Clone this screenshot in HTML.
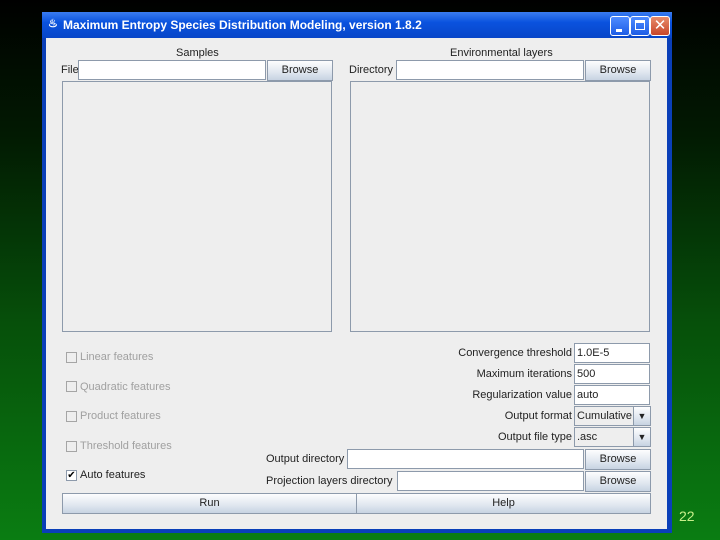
<!DOCTYPE html><html><head><style>
body{margin:0;width:720px;height:540px;overflow:hidden;background:linear-gradient(#000 0%,#021a02 25%,#06500a 60%,#0a7d12 100%);font-family:"Liberation Sans",sans-serif;position:relative}
.a{position:absolute}
.win{left:42px;top:12px;width:630px;height:521px;background:#0a3fb8}
.tb{left:42px;top:12px;width:630px;height:26px;background:linear-gradient(#3a7cf0,#0a52de 40%,#0846c8);color:#fff;font-weight:bold;font-size:12px}
.cont{left:46px;top:38px;width:621px;height:491px;background:#eeeeee}
.f{background:#fff;border:1px solid #8d9aab;box-sizing:border-box}
.b{background:linear-gradient(#fdfdfe,#dfe6ef 60%,#c7d3e2);border:1px solid #8d9aab;box-sizing:border-box;font-size:11px;text-align:center;color:#222;line-height:18px}
.l{font-size:11px;color:#222;white-space:nowrap}
.cb{width:11px;height:11px;border:1px solid #a5a5a5;box-sizing:border-box;background:#eee}
.g{color:#a0a0a0;font-size:11px}
.list{background:#eeeeee;border:1px solid #8d9aab;box-sizing:border-box}
.tbb{width:20px;height:20px;border:1px solid #fff;border-radius:3px;box-sizing:border-box;top:16px;background:linear-gradient(#4f8cff,#1d5ce6)}
</style></head><body>
<div class="a win"></div>
<div class="a tb"><span class="a" style="left:6px;top:5px;font-size:11px">♨</span><span class="a" style="left:21px;top:6px">Maximum Entropy Species Distribution Modeling, version 1.8.2</span></div>
<div class="a tbb" style="left:610px"><div class="a" style="left:5px;top:12px;width:6px;height:3px;background:#fff"></div></div>
<div class="a tbb" style="left:630px"><div class="a" style="left:4px;top:3px;width:10px;height:10px;border:1px solid #fff;border-top-width:3px;box-sizing:border-box"></div></div>
<div class="a tbb" style="left:650px;background:linear-gradient(#e88b6a,#c8462a);color:#fff;font-size:15px;text-align:center;line-height:18px">✕</div>
<div class="a cont"></div>
<div class="a l" style="left:176px;top:47px">Samples</div>
<div class="a l" style="left:450px;top:47px">Environmental layers</div>
<div class="a l" style="left:61px;top:64px">File</div>
<div class="a f" style="left:78px;top:60px;width:188px;height:20px"></div>
<div class="a b" style="left:267px;top:60px;width:66px;height:21px">Browse</div>
<div class="a l" style="left:349px;top:64px">Directory</div>
<div class="a f" style="left:396px;top:60px;width:188px;height:20px"></div>
<div class="a b" style="left:585px;top:60px;width:66px;height:21px">Browse</div>
<div class="a list" style="left:62px;top:81px;width:270px;height:251px"></div>
<div class="a list" style="left:350px;top:81px;width:300px;height:251px"></div>
<div class="a cb" style="left:66px;top:352px"></div><div class="a g" style="left:80px;top:351px">Linear features</div>
<div class="a cb" style="left:66px;top:381px"></div><div class="a g" style="left:80px;top:381px">Quadratic features</div>
<div class="a cb" style="left:66px;top:411px"></div><div class="a g" style="left:80px;top:410px">Product features</div>
<div class="a cb" style="left:66px;top:441px"></div><div class="a g" style="left:80px;top:440px">Threshold features</div>
<div class="a cb" style="left:66px;top:470px;border-color:#8d9aab;background:#fff;font-size:10px;line-height:9px;text-align:center">✔</div><div class="a l" style="left:80px;top:469px">Auto features</div>
<div class="a l" style="right:148px;top:347px">Convergence threshold</div>
<div class="a f l" style="left:574px;top:343px;width:76px;height:20px;padding:3px 2px">1.0E-5</div>
<div class="a l" style="right:148px;top:368px">Maximum iterations</div>
<div class="a f l" style="left:574px;top:364px;width:76px;height:20px;padding:3px 2px">500</div>
<div class="a l" style="right:148px;top:389px">Regularization value</div>
<div class="a f l" style="left:574px;top:385px;width:76px;height:20px;padding:3px 2px">auto</div>
<div class="a l" style="right:148px;top:410px">Output format</div>
<div class="a f l" style="left:574px;top:406px;width:60px;height:20px;padding:3px 2px;background:#eee">Cumulative</div>
<div class="a b" style="left:633px;top:406px;width:18px;height:20px;font-size:9px">▼</div>
<div class="a l" style="right:148px;top:431px">Output file type</div>
<div class="a f l" style="left:574px;top:427px;width:60px;height:20px;padding:3px 2px;background:#eee">.asc</div>
<div class="a b" style="left:633px;top:427px;width:18px;height:20px;font-size:9px">▼</div>
<div class="a l" style="left:266px;top:453px">Output directory</div>
<div class="a f" style="left:347px;top:449px;width:237px;height:20px"></div>
<div class="a b" style="left:585px;top:449px;width:66px;height:21px">Browse</div>
<div class="a l" style="left:266px;top:475px">Projection layers directory</div>
<div class="a f" style="left:397px;top:471px;width:187px;height:20px"></div>
<div class="a b" style="left:585px;top:471px;width:66px;height:21px">Browse</div>
<div class="a b" style="left:62px;top:493px;width:295px;height:21px">Run</div>
<div class="a b" style="left:356px;top:493px;width:295px;height:21px">Help</div>
<div class="a" style="left:679px;top:508px;color:#c8f08a;font-size:14px">22</div>
</body></html>
